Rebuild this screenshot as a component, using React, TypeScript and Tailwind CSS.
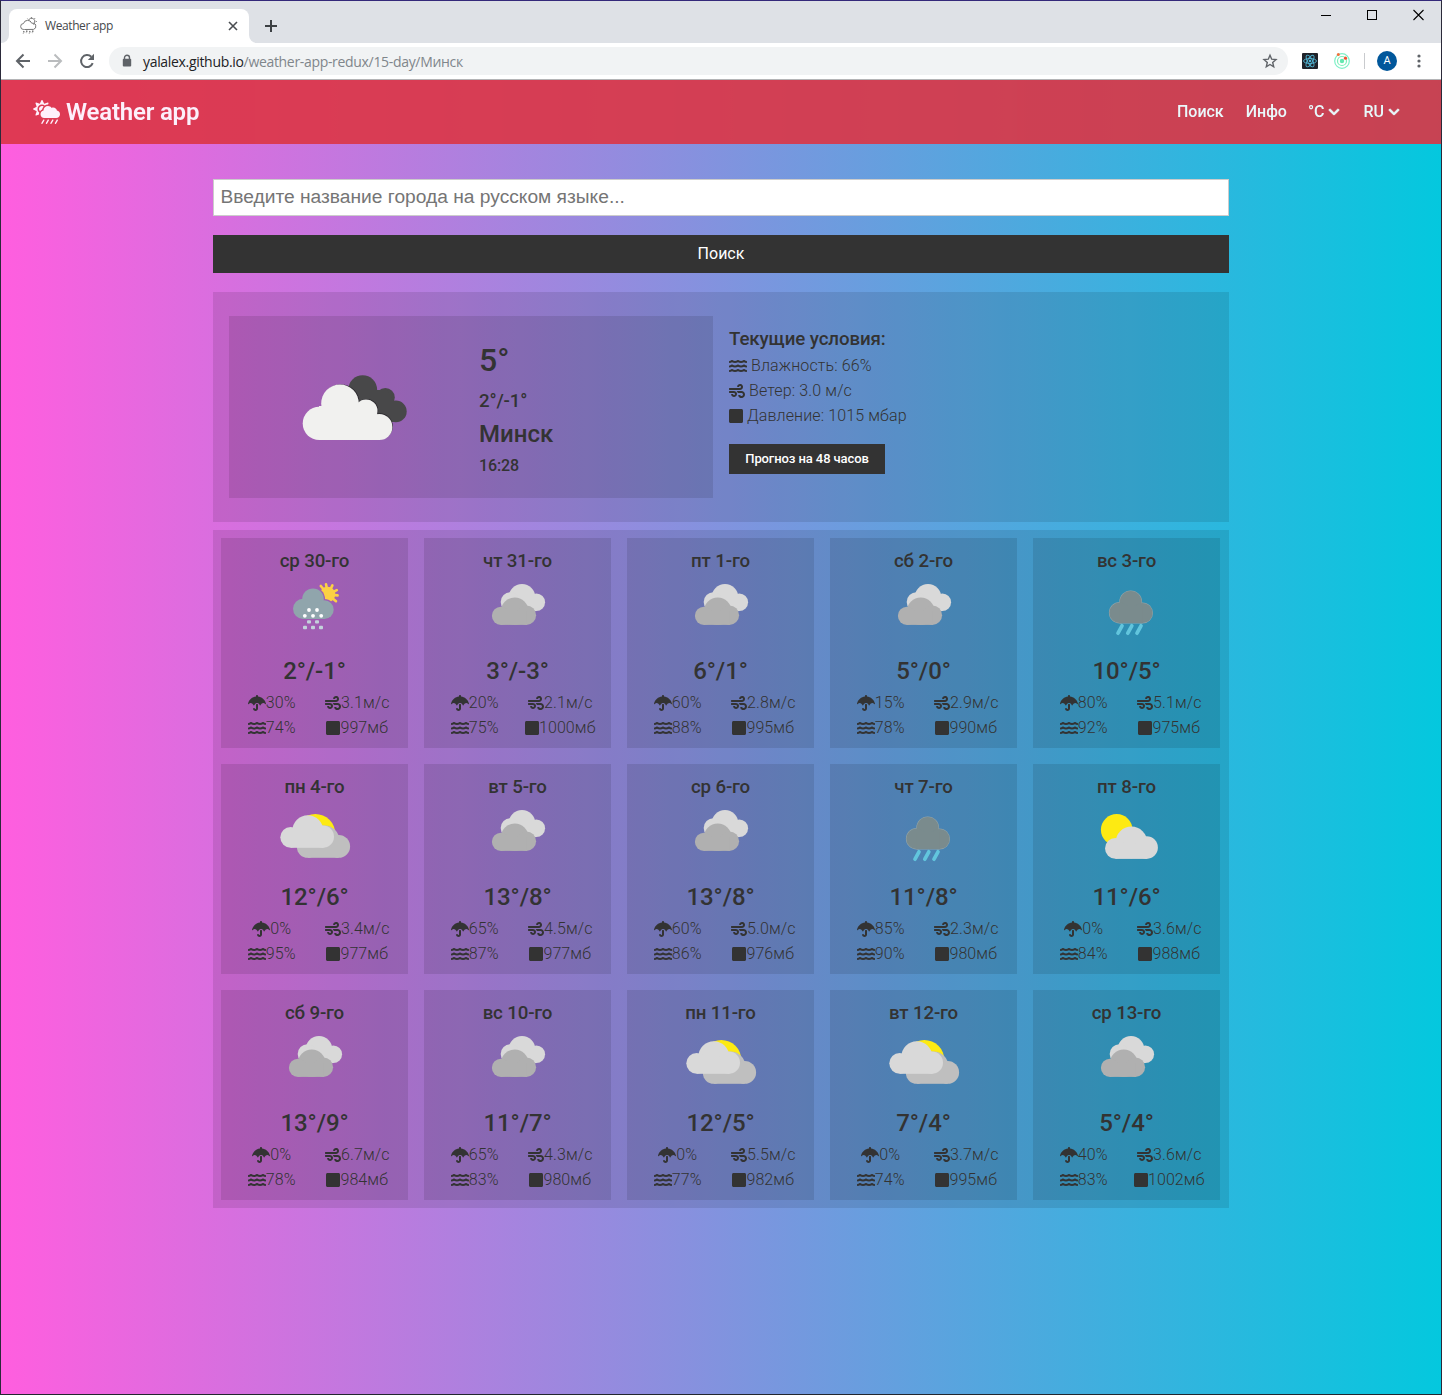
import React, { ReactNode } from "react";
import {
  FaCloudSunRain,
  FaChevronDown,
  FaUmbrella,
  FaWind,
  FaWater,
  FaSquare,
} from "react-icons/fa";

type Sky = "sleet" | "clouds" | "rain" | "broken" | "sunny";

type Day = {
  title: string;
  sky: Sky;
  temp: string;
  pop: string;
  wind: string;
  hum: string;
  pres: string;
};

const d = (
  title: string,
  sky: Sky,
  temp: string,
  pop: string,
  wind: string,
  hum: string,
  pres: string
): Day => ({ title, sky, temp, pop, wind, hum, pres });

const days: Day[] = [
  d("ср 30-го", "sleet", "2°/-1°", "30", "3.1", "74", "997"),
  d("чт 31-го", "clouds", "3°/-3°", "20", "2.1", "75", "1000"),
  d("пт 1-го", "clouds", "6°/1°", "60", "2.8", "88", "995"),
  d("сб 2-го", "clouds", "5°/0°", "15", "2.9", "78", "990"),
  d("вс 3-го", "rain", "10°/5°", "80", "5.1", "92", "975"),
  d("пн 4-го", "broken", "12°/6°", "0", "3.4", "95", "977"),
  d("вт 5-го", "clouds", "13°/8°", "65", "4.5", "87", "977"),
  d("ср 6-го", "clouds", "13°/8°", "60", "5.0", "86", "976"),
  d("чт 7-го", "rain", "11°/8°", "85", "2.3", "90", "980"),
  d("пт 8-го", "sunny", "11°/6°", "0", "3.6", "84", "988"),
  d("сб 9-го", "clouds", "13°/9°", "0", "6.7", "78", "984"),
  d("вс 10-го", "clouds", "11°/7°", "65", "4.3", "83", "980"),
  d("пн 11-го", "broken", "12°/5°", "0", "5.5", "77", "982"),
  d("вт 12-го", "broken", "7°/4°", "0", "3.7", "74", "995"),
  d("ср 13-го", "clouds", "5°/4°", "40", "3.6", "83", "1002"),
];

function SkyIcon({ sky }: { sky: Sky }) {
  let art: ReactNode = null;
  if (sky === "clouds") {
    art = (
      <>
        <g fill="#d9d9d9">
          <circle cx="45" cy="19.5" r="13.4" />
          <circle cx="33.5" cy="24" r="9.8" />
          <circle cx="59.3" cy="24.3" r="8.8" />
          <rect x="34" y="20" width="25.3" height="13.1" />
        </g>
        <g fill="#b0b0b0">
          <circle cx="37.7" cy="33.2" r="13.7" />
          <circle cx="24" cy="37.8" r="9.1" />
          <circle cx="49.4" cy="37.2" r="9.7" />
          <rect x="24" y="33" width="25.4" height="13.9" />
        </g>
      </>
    );
  } else if (sky === "rain") {
    art = (
      <>
        <g fill="#93a4a8">
          <circle cx="44.7" cy="23.9" r="11.4" />
          <circle cx="33.7" cy="34.7" r="10.8" />
          <circle cx="56.4" cy="35" r="10.6" />
          <rect x="33.7" y="28" width="22.7" height="17.5" />
        </g>
        <g fill="#7a8b8d">
          <circle cx="44.7" cy="23.9" r="10.9" />
          <circle cx="33.7" cy="34.7" r="10.3" />
          <circle cx="56.4" cy="35" r="10.1" />
          <rect x="33.7" y="28" width="22.7" height="17" />
        </g>
        <path
          d="M36 47.8 32 55.2M45.800 47.800 41.800 55.200M55 47.800 51 55.200"
          stroke="#62c5dd"
          strokeWidth="3.700"
          strokeLinecap="round"
        />
      </>
    );
  } else if (sky === "sleet") {
    art = (
      <>
        <mask id="sleet-gap">
          <rect width="81" height="64" fill="#fff" />
          <circle cx="39" cy="21" r="12" fill="#000" />
          <circle cx="50.4" cy="31.8" r="10.7" fill="#000" />
        </mask>
        <g mask="url(#sleet-gap)">
          <circle cx="53.5" cy="16.5" r="7.8" fill="#fcd144" />
          <path
            d="M54 16.5 46.8 8M54 16.5 52 6.2M54 16.5 58.4 7.4M54 16.5 62.8 12.2M54 16.5 63.6 17.4M54 16.5 62 23.2"
            stroke="#fcd144"
            strokeWidth="2.6"
            strokeLinecap="round"
          />
        </g>
        <g fill="#90a5ac">
          <circle cx="39" cy="21.2" r="10.8" />
          <circle cx="29.1" cy="30.8" r="10.1" />
          <circle cx="50.3" cy="31.7" r="9.4" />
          <rect x="29" y="27" width="21.5" height="14" />
        </g>
        <g fill="#fff">
          <circle cx="35" cy="32" r="1.9" />
          <circle cx="43" cy="32" r="1.9" />
          <circle cx="30.8" cy="37.8" r="1.9" />
          <circle cx="39" cy="37.8" r="1.9" />
          <circle cx="47.2" cy="37.8" r="1.9" />
        </g>
        <g fill="#c3d3db">
          <rect x="33" y="42.3" width="4" height="3.2" rx="1" />
          <rect x="41" y="42.3" width="4" height="3.2" rx="1" />
          <rect x="29" y="47.8" width="4" height="3.4" rx="1" />
          <rect x="37" y="47.8" width="4" height="3.4" rx="1" />
          <rect x="45" y="47.8" width="4" height="3.4" rx="1" />
        </g>
      </>
    );
  } else if (sky === "broken") {
    art = (
      <>
        <circle cx="41.3" cy="30" r="20" fill="#fdea12" />
        <g fill="#bfbfbf">
          <circle cx="50.4" cy="36.3" r="14.9" />
          <circle cx="64.7" cy="42.4" r="11.4" />
          <circle cx="33.7" cy="43" r="10.8" />
          <rect x="33.7" y="38" width="31" height="15.8" />
        </g>
        <g fill="#d9d9d9">
          <circle cx="33.8" cy="26.7" r="15.4" />
          <circle cx="16.7" cy="33.3" r="10.4" />
          <circle cx="48.8" cy="32.7" r="11.2" />
          <rect x="16.7" y="28" width="32.1" height="15.8" />
        </g>
      </>
    );
  } else {
    art = (
      <>
        <circle cx="30.7" cy="25.8" r="15.8" fill="#fdea12" />
        <g fill="#d9d9d9">
          <circle cx="45.4" cy="38.4" r="15.8" />
          <circle cx="29.4" cy="44.4" r="10.4" />
          <circle cx="60.6" cy="43.6" r="11.3" />
          <rect x="29.4" y="40" width="31.2" height="14.9" />
        </g>
      </>
    );
  }
  return (
    <svg className="block h-[64px] w-[81px]" viewBox="0 0 81 64" fill="none">
      {art}
    </svg>
  );
}

function BigCloud() {
  return (
    <svg className="block h-[80px] w-[120px]" viewBox="0 0 120 80">
      <g fill="#484849">
        <circle cx="67.7" cy="19.6" r="14.4" />
        <circle cx="90.3" cy="27.5" r="9.5" />
        <circle cx="100.8" cy="41.4" r="10.9" />
        <path d="M62 20h30l8 14v18H80z" />
      </g>
      <g fill="#29272c">
        <circle cx="46" cy="33" r="18.6" />
        <circle cx="71.800" cy="40.400" r="11.400" />
        <circle cx="84.800" cy="56.200" r="13" />
      </g>
      <g fill="#f1f1ef">
        <circle cx="24.3" cy="53.4" r="16.6" />
        <circle cx="45" cy="33.4" r="18.8" />
        <circle cx="71" cy="41" r="11.5" />
        <circle cx="84.3" cy="57" r="13.1" />
        <path d="M24 36h52l9 12v22H24z" />
      </g>
    </svg>
  );
}

function Stat({ icon, children }: { icon: ReactNode; children: ReactNode }) {
  return (
    <div className="flex h-[25px] items-center justify-center whitespace-nowrap font-light tracking-[0.1px]">
      {icon}
      <span>{children}</span>
    </div>
  );
}

function DayCard({ day }: { day: Day }) {
  return (
    <div className="flex h-[210px] flex-col items-center bg-black/10 px-2 pt-2">
      <h3 className="h-8 text-[18.7px] leading-[30px] font-medium tracking-[-0.15px]">{day.title}</h3>
      <SkyIcon sky={day.sky} />
      <p className="mt-[11px] h-[37px] w-full text-center text-[24px] leading-[36px] font-medium tracking-[-0.1px]">
        {day.temp}
      </p>
      <div className="grid w-full grid-cols-2">
        <Stat icon={<FaUmbrella className="h-4 w-[18px]" />}>{day.pop}%</Stat>
        <Stat icon={<FaWind className="h-4 w-4" />}>{day.wind}м/с</Stat>
        <Stat icon={<FaWater className="h-4 w-[18px]" />}>{day.hum}%</Stat>
        <Stat icon={<FaSquare className="h-4 w-[14px]" />}>{day.pres}мб</Stat>
      </div>
    </div>
  );
}

function TabStrip() {
  return (
    <div className="flex h-[42px] items-end bg-[#dee1e6]">
      <div className="h-2 w-2 bg-white">
        <div className="h-2 w-2 rounded-br-lg bg-[#dee1e6]" />
      </div>
      <div className="flex h-[34px] w-[240px] items-center rounded-t-lg bg-white pr-[11px] pl-[11px]">
        <svg className="h-[18px] w-[18px]" viewBox="0 0 18 18" fill="none" stroke="#777" strokeWidth="1">
          <path d="M4.5 12.5h-.7a3 3 0 0 1-.3-6 4.3 4.3 0 0 1 8.2-.3 3.200 3.200 0 0 1 1.800 6.200z" />
          <path d="M8.500 3.200a3.300 3.300 0 0 1 6.100 2.600c-.2.800-.6 1.300-1.200 1.700M11.500.2v1M15 1.200l-.7.800M16.800 4.500h-1M7.500 1.600l.7.700M16 8l-.8-.7" />
          <path d="M4 14l-.8 2.500M7 13.500 6.200 16M10 14l-.8 2.500M13 13.500l-.8 2.500" strokeDasharray="1.500 .7" strokeWidth="1.400" />
        </svg>
        <span className="ml-[7px] flex-1 font-['Open_Sans',sans-serif] text-[12px] tracking-[-0.4px] text-[#45484c]">
          Weather app
        </span>
        <svg className="h-[10px] w-[10px]" viewBox="0 0 10 10" stroke="#4a4d51" strokeWidth="1.600">
          <path d="M1 1l8 8M9 1L1 9" />
        </svg>
      </div>
      <div className="h-2 w-2 bg-white">
        <div className="h-2 w-2 rounded-bl-lg bg-[#dee1e6]" />
      </div>
      <svg className="mb-[11px] ml-2 h-3 w-3" viewBox="0 0 12 12" stroke="#3c4043" strokeWidth="2">
        <path d="M6 0v12M0 6h12" />
      </svg>
      <div className="flex-1" />
      <div className="mr-[17px] flex items-center gap-[35px] self-start pt-[8px]">
        <svg className="h-3 w-[11px]" viewBox="0 0 11 12" stroke="#000" shapeRendering="crispEdges">
          <path d="M0 6.500h10" />
        </svg>
        <svg className="h-3 w-[11px]" viewBox="0 0 11 12" fill="none" stroke="#000" shapeRendering="crispEdges">
          <rect x=".5" y="1.500" width="9" height="9" />
        </svg>
        <svg className="h-3 w-[11px]" viewBox="0 0 11 12" stroke="#000" strokeWidth="1.100">
          <path d="M.5 1l10 10M10.500 1l-10 10" />
        </svg>
      </div>
    </div>
  );
}

function Toolbar() {
  return (
    <div className="flex h-[37px] items-center border-b border-[#b4b4b6] bg-white pl-[14px]">
      <svg className="h-4 w-4" viewBox="0 0 16 16" fill="none" stroke="#5f6368" strokeWidth="2">
        <path d="M15 8H2.500M8.500 1.500 2 8l6.500 6.500" />
      </svg>
      <svg className="ml-4 h-4 w-4" viewBox="0 0 16 16" fill="none" stroke="#babcbe" strokeWidth="2">
        <path d="M1 8h12.500M7.500 1.500 14 8l-6.500 6.500" />
      </svg>
      <svg className="ml-4 h-4 w-4" viewBox="0 0 16 16" fill="none">
        <path d="M13.700 10.200A6 6 0 1 1 12.300 3.800" stroke="#5f6368" strokeWidth="2" />
        <path d="M15 .8v6.200H8.800z" fill="#5f6368" />
      </svg>
      <div className="ml-[14px] flex h-7 w-[1179px] items-center rounded-full bg-[#f1f3f4] pr-[10px] pl-[13px]">
        <svg className="h-[14px] w-[10px]" viewBox="0 0 10 14">
          <path d="M2.500 6V3.800a2.500 2.500 0 0 1 5 0V6" fill="none" stroke="#5f6368" strokeWidth="1.400" />
          <rect x=".8" y="4.800" width="8.400" height="7.600" rx="1" fill="#5f6368" />
        </svg>
        <span className="ml-[11px] flex-1 font-['Open_Sans',sans-serif] text-[14px] tracking-[-0.32px] text-[#202124]">
          yalalex.github.io
          <span className="text-[#80868b]">/weather-app-redux/15-day/Минск</span>
        </span>
        <svg className="h-4 w-4" viewBox="0 0 16 16" fill="none" stroke="#5f6368" strokeWidth="1.400">
          <path d="M8 2.200l1.700 4 4.300.4-3.300 2.900 1 4.300L8 11.500l-3.700 2.300 1-4.300L2 6.600l4.300-.4z" />
        </svg>
      </div>
      <svg className="ml-[14px] h-4 w-4" viewBox="0 0 16 16">
        <rect width="16" height="16" rx="1" fill="#20232a" />
        <g fill="none" stroke="#52b5d4" strokeWidth=".9">
          <ellipse cx="8" cy="8" rx="6.500" ry="2.500" />
          <ellipse cx="8" cy="8" rx="6.500" ry="2.500" transform="rotate(60 8 8)" />
          <ellipse cx="8" cy="8" rx="6.500" ry="2.500" transform="rotate(120 8 8)" />
        </g>
        <circle cx="8" cy="8" r="1.300" fill="#52b5d4" />
      </svg>
      <svg className="ml-4 h-4 w-4" viewBox="0 0 16 16" fill="none">
        <circle cx="8" cy="8" r="7.300" stroke="#7df0c8" strokeWidth="1.200" />
        <circle cx="8" cy="8" r="4.500" stroke="#7df0b8" strokeWidth="1.200" />
        <circle cx="8" cy="8" r="2.200" fill="#63e8b0" />
        <circle cx="4.300" cy="1.500" r="1.500" fill="#f3703a" />
        <circle cx="11.500" cy="5.200" r="1.600" fill="#f3502f" />
      </svg>
      <div className="ml-[14px] h-4 w-px bg-[#c9cbce]" />
      <div className="ml-3 flex h-5 w-5 items-center justify-center rounded-full bg-[#01579b] pt-px font-['Roboto',sans-serif] text-[11px] text-white">
        A
      </div>
      <svg className="ml-[20px] h-4 w-1" viewBox="0 0 4 16" fill="#5f6368">
        <circle cx="2" cy="3" r="1.600" />
        <circle cx="2" cy="8" r="1.600" />
        <circle cx="2" cy="13" r="1.600" />
      </svg>
    </div>
  );
}

function Header() {
  return (
    <div className="flex h-16 items-center justify-between bg-[#dc3545] pr-[41px] pl-8 text-white opacity-90">
      <div className="flex items-center text-[24px] font-semibold tracking-[-0.2px]">
        <FaCloudSunRain className="h-6 w-[27px]" />
        <span className="ml-[6px]">Weather app</span>
      </div>
      <div className="flex items-center text-[16px] font-medium">
        <span>Поиск</span>
        <span className="ml-[22px]">Инфо</span>
        <span className="ml-[21px] flex items-center gap-1">
          °C <FaChevronDown className="h-3 w-3 stroke-white stroke-[30px]" />
        </span>
        <span className="ml-[23px] flex items-center gap-1">
          RU <FaChevronDown className="h-3 w-3 stroke-white stroke-[30px]" />
        </span>
      </div>
    </div>
  );
}

function Current() {
  return (
    <section className="mt-[19px] flex h-[230px] gap-4 bg-black/10 px-4 py-6">
      <div className="flex h-[182px] w-[484px] bg-black/10">
        <div className="w-[250px] pt-[54px] pl-[66px]">
          <BigCloud />
        </div>
        <div className="pt-6 font-medium">
          <div className="h-[44px] text-[32px] leading-[40px]">5°</div>
          <div className="h-[33px] text-[18.7px] leading-[34px] tracking-[-0.15px]">2°/-1°</div>
          <div className="h-[33px] text-[24px] leading-[35px]">Минск</div>
          <div className="h-[32px] text-[16px] leading-[32px] tracking-[-0.1px]">16:28</div>
        </div>
      </div>
      <div className="flex flex-col items-start pt-2 font-light tracking-[0.13px]">
        <h4 className="h-[29px] text-[18.7px] leading-[30px] font-medium tracking-[-0.1px]">
          Текущие условия:
        </h4>
        <div className="flex h-[25px] items-center gap-1">
          <FaWater className="h-4 w-[18px]" /> Влажность: 66%
        </div>
        <div className="flex h-[25px] items-center gap-1">
          <FaWind className="h-4 w-4" /> Ветер: 3.0 м/с
        </div>
        <div className="flex h-[25px] items-center gap-1">
          <FaSquare className="h-4 w-[14px]" /> Давление: 1015 мбар
        </div>
        <button className="mt-4 h-[30px] w-[156px] bg-[#333] text-[13px] font-medium tracking-[-0.1px] text-white">
          Прогноз на 48 часов
        </button>
      </div>
    </section>
  );
}

export default function App() {
  return (
    <div className="flex h-[1395px] w-[1442px] flex-col border-x border-t border-b border-x-[#2b2a3a] border-t-[#34297a] border-b-[#22262e] font-['Roboto',sans-serif] text-[#333]">
      <TabStrip />
      <Toolbar />
      <div className="flex-1 bg-linear-to-r/srgb from-[#ff5edf] to-[#04c8de]">
        <Header />
        <main className="mx-auto w-[1016px] pt-[35px]">
          <input
            className="block h-[37px] w-full border border-[#ccc] bg-white px-[6.5px] pb-px font-['Liberation_Sans',sans-serif] text-[19.2px] placeholder:text-[#757575]"
            placeholder="Введите название города на русском языке..."
          />
          <button className="mt-[19px] block h-[38px] w-full bg-[#333] text-[16px] text-white">
            Поиск
          </button>
          <Current />
          <section className="mt-2 grid h-[678px] grid-cols-[repeat(5,187px)] content-start gap-4 bg-black/10 p-2">
            {days.map((day) => (
              <DayCard key={day.title} day={day} />
            ))}
          </section>
        </main>
      </div>
    </div>
  );
}
